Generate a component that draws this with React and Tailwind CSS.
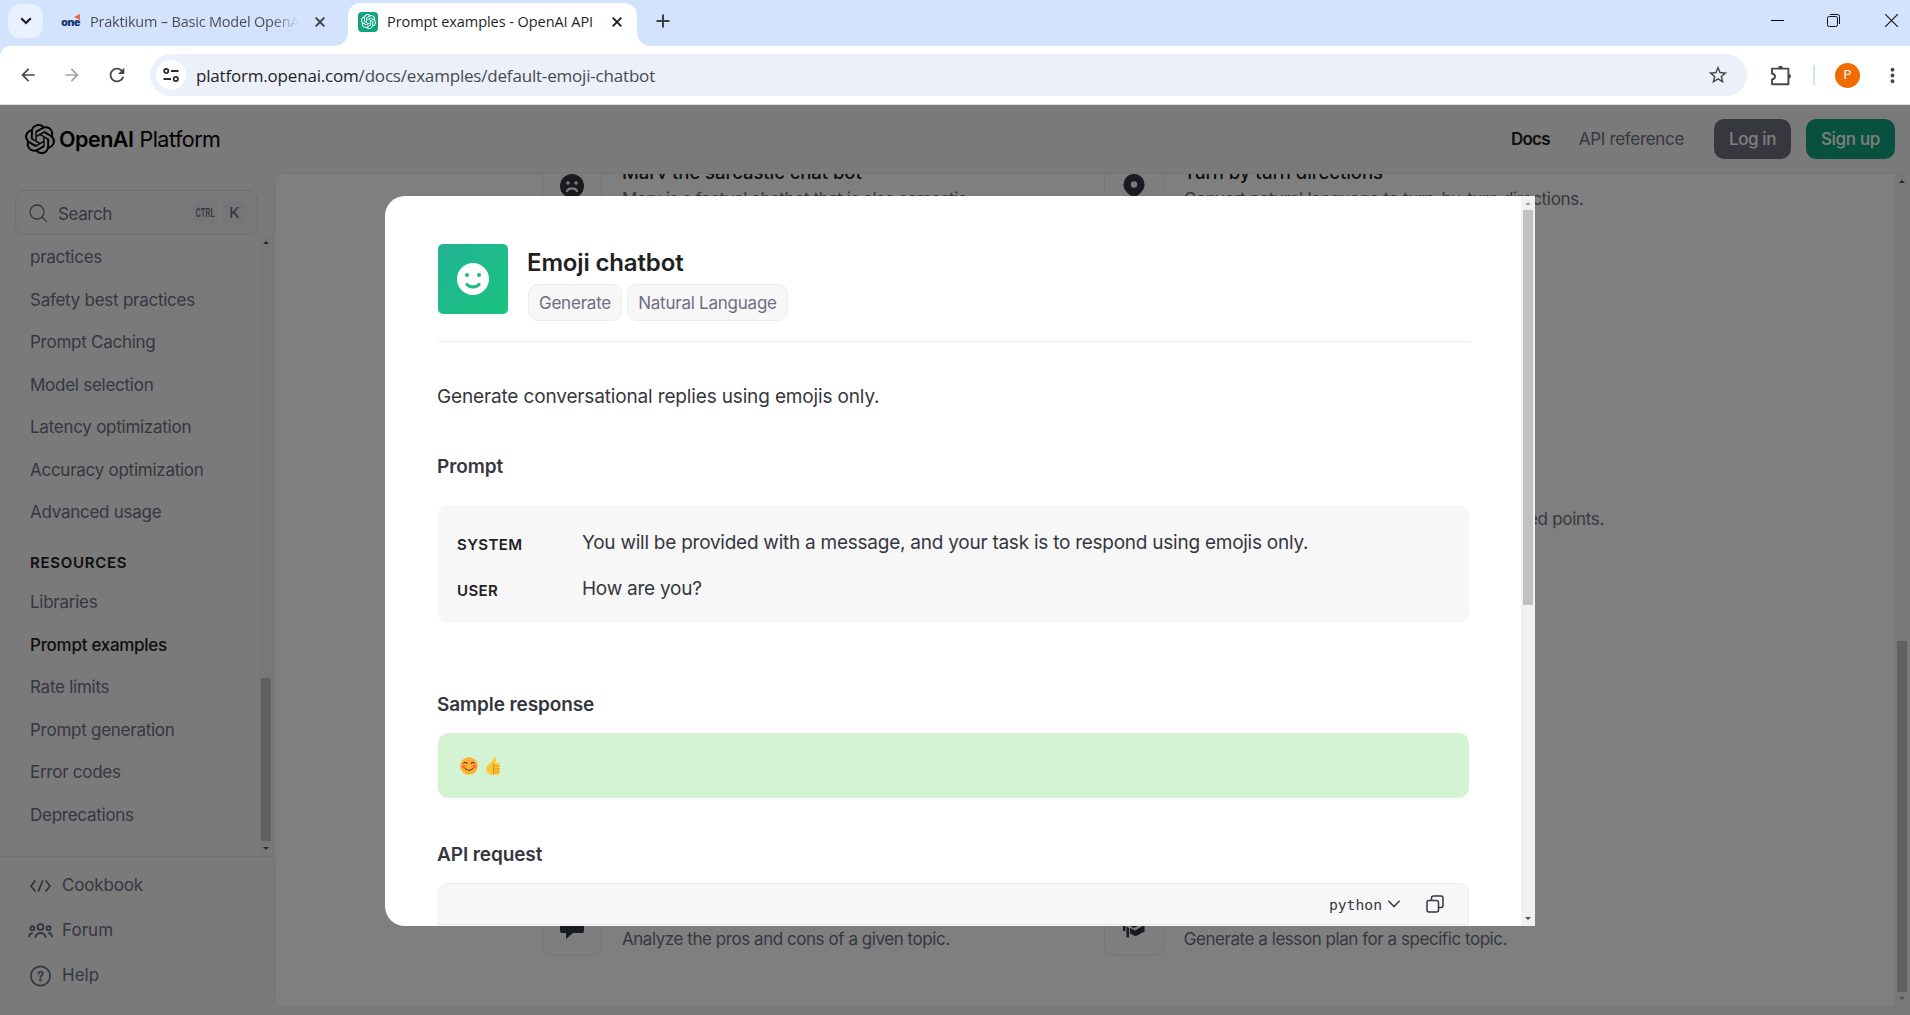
import React from 'react';
import { SiOpenai } from 'react-icons/si';
import { MdArrowBack, MdArrowForward, MdRefresh, MdStarBorder, MdMoreVert } from 'react-icons/md';

function Cross({ className }) {
  return (
    <svg viewBox="0 0 10 10" className={className} fill="none" stroke="currentColor" strokeWidth="1.9">
      <path d="M.7.7l8.6 8.6M9.3.7L.7 9.3" />
    </svg>
  );
}

function TabStrip() {
  return (
    <div className="flex h-[46px] bg-[#d3e2fd] pl-2">
      <div className="mt-1 flex h-[34px] w-[35px] items-center justify-center rounded-xl bg-[#e9f0fe]">
        <svg viewBox="0 0 12 8" className="h-2 w-3" fill="none" stroke="#1f1f1f" strokeWidth="2.2">
          <path d="M1.2 1.2L6 6l4.800-4.800" />
        </svg>
      </div>
      <div className="flex h-[43px] w-[291px] items-center pl-[18px]">
        <div className="relative w-[19px] font-['Open_Sans'] text-[11px] font-extrabold leading-none tracking-[-0.8px] text-[#173a78]">
          one
          <svg viewBox="0 0 6 6" className="absolute -top-[2px] right-0 size-[6px]">
            <path d="M6 0v6L0 3z" fill="#f2643d" />
          </svg>
        </div>
        <div className="ml-[10px] w-[213px] overflow-hidden whitespace-nowrap bg-linear-to-r from-[#474a50] from-85% to-[#d3e2fd] to-98% bg-clip-text text-[14.5px] tracking-[-0.2px] text-transparent">
          Praktikum – Basic Model OpenAI
        </div>
        <Cross className="ml-[12px] size-[10px] text-[#3c3f43]" />
      </div>
      <div className="flex w-[14px] items-end bg-linear-to-t from-white from-[14px] to-transparent to-[14px]">
        <div className="h-[46px] w-[14px] rounded-br-[14px] bg-[#d3e2fd]" />
      </div>
      <div className="mt-[3px] flex w-[289px] items-center rounded-t-[13px] bg-white pb-[6px] pl-[10px]">
        <div className="flex size-5 items-center justify-center rounded-[4px] bg-[#10a37f]">
          <SiOpenai className="size-[15px] text-white" />
        </div>
        <div className="ml-[9px] w-[218px] whitespace-nowrap text-[14.5px] tracking-[-0.06px] text-[#1f1f1f]">
          Prompt examples - OpenAI API
        </div>
        <Cross className="ml-[7px] size-[10px] text-[#1f1f1f]" />
      </div>
      <div className="flex w-[14px] items-end bg-linear-to-t from-white from-[14px] to-transparent to-[14px]">
        <div className="h-[46px] w-[14px] rounded-bl-[14px] bg-[#d3e2fd]" />
      </div>
      <svg viewBox="0 0 14 14" className="ml-[5px] mt-[14px] size-[14px]" stroke="#3c3f43" strokeWidth="2">
        <path d="M7 .5v13M.5 7h13" />
      </svg>
      <div className="mr-3 ml-auto flex gap-[43px] pt-[14px]">
        <svg viewBox="0 0 13 13" className="size-[13px]" stroke="#000"><path d="M0 6.500h13" /></svg>
        <svg viewBox="0 0 13 13" className="size-[13px]" fill="none" stroke="#111">
          <rect x=".5" y="2.500" width="10" height="10" rx="1.800" />
          <path d="M3 .5h7.500a2 2 0 0 1 2 2V10" />
        </svg>
        <svg viewBox="0 0 13 13" className="ml-[2px] size-[13px]" fill="none" stroke="#111" strokeWidth="1.1"><path d="M0 0l13 13M13 0L0 13" /></svg>
      </div>
    </div>
  );
}

function Toolbar() {
  return (
    <div className="bg-[#d3e2fd]">
      <div className="flex h-[59px] items-center rounded-tl-[10px] border-b border-[#dcdcdc] bg-white pl-[18px]">
        <MdArrowBack className="size-5 text-[#474747]" />
        <MdArrowForward className="ml-[24px] size-5 text-[#a5a5a5]" />
        <MdRefresh className="ml-[24px] size-[22px] text-[#474747]" />
        <div className="ml-[22px] flex h-[42px] w-[1597px] items-center rounded-full bg-[#ebf0fa] pl-[6px]">
          <div className="flex size-[30px] items-center justify-center rounded-full bg-white">
            <svg viewBox="0 0 16 14" className="h-[14px] w-4" fill="none" stroke="#2b2b2b" strokeWidth="1.800">
              <circle cx="3.200" cy="3" r="2.100" />
              <path d="M8 3h7.500M.5 11H8" />
              <circle cx="12.800" cy="11" r="2.100" />
            </svg>
          </div>
          <div className="ml-[10px] whitespace-nowrap pt-px text-[17px] tracking-[-0.19px] text-[#474a4f]">
            <span className="text-[#1f1f1f]">platform.openai.com</span>/docs/examples/default-emoji-chatbot
          </div>
          <MdStarBorder className="ml-auto mr-[18px] size-[22px] text-[#474747]" />
        </div>
        <svg viewBox="0 0 21 21" className="ml-[24px] size-[21px]" fill="none" stroke="#474747" strokeWidth="1.900" strokeLinejoin="round">
          <path d="M1 3.600h16.400v15.700H1v-4.800c1.900-.4 3-1.500 3-3s-1.100-2.600-3-3z" />
          <path d="M7 3.200a2.400 2.400 0 0 1 4.800 0zM17.700 9a2.300 2.300 0 0 1 0 4.600z" fill="#474747" stroke="none" />
        </svg>
        <div className="ml-[21px] h-5 w-[2px] bg-[#d3e2fd]" />
        <div className="ml-[20px] flex size-[25px] items-center justify-center rounded-full bg-[#f06c00] font-['Roboto'] text-[12.500px] text-white">P</div>
        <MdMoreVert className="ml-[21px] size-[23px] text-[#474747]" />
      </div>
    </div>
  );
}

function Arrow({ down, className }) {
  return (
    <svg viewBox="0 0 6 3" className={`h-[3px] w-[6px] shrink-0 ${className}`} fill="currentColor">
      <path d={down ? 'M0 0h6L3 3z' : 'M0 3h6L3 0z'} />
    </svg>
  );
}

function Header() {
  return (
    <header className="flex h-[68px] items-center pl-[25px] pr-[15px] text-[17px]">
      <SiOpenai className="size-[30px] text-black" />
      <div className="ml-[4px] text-[21.500px] tracking-[-0.5px] text-black">
        <span className="font-semibold">OpenAI</span>
        <span className="ml-[6px]">Platform</span>
      </div>
      <div className="ml-auto pt-[2px] font-semibold tracking-[-0.75px] text-[#202123]">Docs</div>
      <div className="ml-[29px] pt-[2px] tracking-[-0.32px] text-[#6e6e80]">API reference</div>
      <button className="ml-[30px] flex h-10 w-[77px] items-center justify-center rounded-[10px] bg-[#6e6e80] pt-[2px] font-medium tracking-[-0.4px] text-white">Log in</button>
      <button className="ml-[15px] flex h-10 w-[89px] items-center justify-center rounded-[10px] bg-[#10a37f] pt-[2px] font-medium tracking-[-0.3px] text-white">Sign up</button>
    </header>
  );
}

function NavItem({ children, active }) {
  return (
    <div className={active ? 'w-[200px] py-[8.750px] font-medium tracking-[-0.28px] text-[#202123]' : 'w-[200px] py-[8.750px] tracking-[-0.26px]'}>
      {children}
    </div>
  );
}

const guides = ['Safety best practices', 'Prompt Caching', 'Model selection', 'Latency optimization', 'Accuracy optimization', 'Advanced usage'];
const resources = ['Libraries', 'Prompt examples', 'Rate limits', 'Prompt generation', 'Error codes', 'Deprecations'];

function Sidebar() {
  return (
    <aside className="flex w-[274px] shrink-0 flex-col text-[17px] leading-[25px] text-[#6e6e80]">
      <div className="mt-[17px] ml-[15px] flex h-[45px] w-[243px] shrink-0 items-center rounded-[10px] border border-[#dedee4] pl-[13px] pr-[10px]">
        <svg viewBox="0 0 18 18" className="size-[18px]" fill="none" stroke="currentColor" strokeWidth="1.300" strokeLinecap="round">
          <circle cx="8" cy="8" r="7" />
          <path d="M13 13l4.300 4.300" />
        </svg>
        <span className="ml-[11px] pt-[3px] tracking-[-0.4px]">Search</span>
        <span className="ml-auto flex h-[23px] w-[25px] items-center justify-center rounded-[4px] bg-[#ececf1]">
          <span className="inline-block scale-x-[0.62] font-['Roboto'] text-[12.500px] font-semibold">CTRL</span>
        </span>
        <span className="ml-1 flex h-[23px] w-[25px] items-center justify-center rounded-[4px] bg-[#ececf1] text-[15px] font-medium">K</span>
      </div>
      <div className="flex h-[622px] shrink-0 overflow-hidden border-b border-[#e6e6e6]">
        <div className="relative flex-1 overflow-hidden">
          <div className="-mt-[23.500px] pl-[30px]">
            <NavItem>Production best<br />practices</NavItem>
            {guides.map((g) => <NavItem key={g}>{g}</NavItem>)}
            <div className="pt-[15.500px] pb-[7px] text-[15px] font-semibold tracking-[0.7px] text-[#202123]">RESOURCES</div>
            {resources.map((r) => <NavItem key={r} active={r === 'Prompt examples'}>{r}</NavItem>)}
          </div>
          <div className="absolute inset-x-0 top-0 h-2 bg-linear-to-b from-[#f4f4f4] from-40% to-[#f4f4f4]/0" />
        </div>
        <div className="flex w-[15px] flex-col items-center bg-[#f1f1f1] pt-[6px] pr-px">
          <Arrow className="text-[#505050]" />
          <div className="mt-[434px] h-[163px] w-[10px] shrink-0 bg-[#c1c1c1]" />
          <Arrow down className="mt-[6px] text-[#505050]" />
        </div>
      </div>
      <div className="pt-[6px] pl-[28px]">
        <div className="flex h-[45px] items-center">
          <svg viewBox="0 0 25 20" className="h-5 w-[25px]" fill="none" stroke="currentColor" strokeWidth="1.900" strokeLinecap="round" strokeLinejoin="round">
            <path d="M7 5l-4 5 4 5M18 5l4 5-4 5M14.500 5l-4 10" />
          </svg>
          <span className="ml-[9px] tracking-[-0.16px]">Cookbook</span>
        </div>
        <div className="flex h-[45px] items-center">
          <svg viewBox="0 0 25 20" className="h-5 w-[25px]" fill="none" stroke="currentColor" strokeWidth="1.900" strokeLinecap="round">
            <circle cx="12.500" cy="6" r="2.900" />
            <circle cx="4.400" cy="7.200" r="2" />
            <circle cx="20.600" cy="7.200" r="2" />
            <path d="M7.500 16c.6-2.600 2.500-4 5-4s4.400 1.400 5 4M1 15.500c.2-1.700 1.200-3 3-3.200M24 15.500c-.2-1.700-1.200-3-3-3.200" />
          </svg>
          <span className="ml-[9px] tracking-[0.05px]">Forum</span>
        </div>
        <div className="flex h-[45px] items-center">
          <svg viewBox="0 0 25 22" className="h-[22px] w-[25px]" fill="none" stroke="currentColor" strokeWidth="1.800" strokeLinecap="round">
            <circle cx="12.500" cy="11" r="9.600" />
            <path d="M10.400 8.600c.2-1.300 1-1.900 2.100-1.900 1.300 0 2.200.8 2.200 1.900 0 1.700-2.200 1.700-2.200 3.600" />
            <circle cx="12.500" cy="15.200" r=".5" />
          </svg>
          <span className="ml-[9px] tracking-[0px]">Help</span>
        </div>
      </div>
    </aside>
  );
}

const icons = {
  sad: (
    <svg viewBox="0 0 24 24" className="size-6">
      <circle cx="12" cy="12" r="12" fill="#353740" />
      <circle cx="8" cy="9" r="1.800" fill="#f7f7f8" />
      <circle cx="16" cy="9" r="1.800" fill="#f7f7f8" />
      <path d="M7 17c1.600-3.400 8.400-3.400 10 0" fill="none" stroke="#f7f7f8" strokeWidth="2.200" strokeLinecap="round" />
    </svg>
  ),
  pin: (
    <svg viewBox="0 0 24 26" className="h-[26px] w-6">
      <path d="M12 1a10.300 10.300 0 0 1 10.500 10.400C22.500 17 18 21 12 25 6 21 1.500 17 1.500 11.400A10.300 10.300 0 0 1 12 1z" fill="#353740" />
      <circle cx="12" cy="11.500" r="3.200" fill="#f7f7f8" />
    </svg>
  ),
  chat: (
    <svg viewBox="0 0 24 26" className="h-[26px] w-6">
      <path d="M2 0h20a2 2 0 0 1 2 2v16a2 2 0 0 1-2 2h-9l-7 6v-6H2a2 2 0 0 1-2-2V2a2 2 0 0 1 2-2z" fill="#353740" />
    </svg>
  ),
  lesson: (
    <svg viewBox="0 0 24 24" className="size-6">
      <path d="M12 2L.5 8l11.500 6L23.500 8zM1 10h2.500v7H1zM4.500 12.500L7 14v9.500H4.500zM8 14l5 2.500L22.500 11v7c-3 0-6 3.800-9.500 4L8 19.500z" fill="#353740" />
    </svg>
  ),
};

const tight = 'tracking-[-0.45px]';
const normal = 'tracking-[-0.31px]';

const cards = [
  ['Marv the sarcastic chat bot', 'Marv is a factual chatbot that is also sarcastic.', 'sad', tight],
  ['Turn by turn directions', 'Convert natural language to turn-by-turn directions.', 'pin', normal],
  ['Interview questions', 'Create interview questions.', 'chat', tight],
  ['Function from specification', 'Create a Python function from a specification.', 'lesson', tight],
  ['Improve code efficiency', 'Provide ideas for efficiency improvements to code.', 'chat', tight],
  ['Single page website creator', 'Create a single page website.', 'lesson', tight],
  ['Rap battle writer', 'Generate a rap battle between two characters.', 'chat', tight],
  ['Memo writer', 'Generate a company memo based on provided points.', 'lesson', normal],
  ['Emoji chatbot', 'Generate conversational replies using emojis only.', 'chat', tight],
  ['Translation', 'Translate natural language text.', 'lesson', tight],
  ['Socratic tutor', 'Generate responses as a Socratic tutor.', 'chat', tight],
  ['Natural language to SQL', 'Convert natural language into SQL queries.', 'lesson', tight],
  ['Meeting notes summarizer', 'Summarize meeting notes including action items.', 'chat', tight],
  ['Review classifier', 'Classify user reviews based on a set of tags.', 'lesson', tight],
  ['Pro and con discusser', 'Analyze the pros and cons of a given topic.', 'chat', tight],
  ['Lesson plan writer', 'Generate a lesson plan for a specific topic.', 'lesson', tight],
];

function Examples() {
  return (
    <main className="mb-[8px] flex min-w-0 flex-1 overflow-hidden rounded-[10px] border-y border-l border-[#ebebeb] bg-white">
      <div className="flex-1 overflow-hidden">
        <div className="-mt-[18px] ml-[267px] grid w-[1084px] grid-cols-2 grid-rows-[61px_61px_61px_57px] gap-x-[39.500px] gap-y-[45.700px]">
          {cards.map(([title, desc, icon, tracking]) => (
            <div key={title} className="flex h-[60px] gap-5">
              <div className="flex size-[60px] shrink-0 items-center justify-center rounded-[10px] border border-[#ececf1] bg-[#fcfcfd]">{icons[icon]}</div>
              <div className="whitespace-nowrap">
                <div className="pt-[3px] text-[18.500px] font-medium leading-[27px] tracking-[-0.06px] text-[#202123]">{title}</div>
                <div className={`text-[17px] leading-[26px] text-[#6e6e80] ${tracking}`}>{desc}</div>
              </div>
            </div>
          ))}
        </div>
      </div>
      <div className="flex w-[15px] flex-col items-center bg-[#f1f1f1] pt-[6px] pr-px">
        <Arrow className="text-[#505050]" />
        <div className="mt-[458px] h-[351px] w-[10px] shrink-0 bg-[#c1c1c1]" />
        <Arrow down className="mt-[5px] text-[#a3a3a3]" />
      </div>
    </main>
  );
}

function Heading({ children, className }) {
  return <h3 className={`-ml-px text-[19px] font-semibold leading-[30px] tracking-[-0.1px] ${className}`}>{children}</h3>;
}

function Message({ role, children }) {
  return (
    <div className="flex h-[46px] items-center">
      <div className="w-[125px] pt-[5px] text-[15px] font-semibold tracking-[0.4px] text-[#202123]">{role}</div>
      <div className="text-[19px] tracking-[-0.25px]">{children}</div>
    </div>
  );
}

function Modal() {
  return (
    <div className="absolute left-[385px] top-[91px] flex h-[730px] w-[1150px] overflow-hidden rounded-l-[20px] bg-white text-[#353740]">
      <div className="w-[1136px] overflow-hidden pt-12 pr-[52px] pl-[53px]">
        <div className="flex h-[98px] gap-5 border-b border-[#ececec]">
          <div className="flex size-[70px] items-center justify-center rounded-[5px] bg-linear-to-br from-[#22b396] to-[#19c37d]">
            <svg viewBox="0 0 32 32" className="size-8">
              <circle cx="16" cy="16" r="16" fill="#fff" />
              <circle cx="10" cy="12" r="2.100" fill="#1fbb88" />
              <circle cx="22" cy="12" r="2.100" fill="#1fbb88" />
              <path d="M10 21.500c3 3.200 9 3.200 12 0" fill="none" stroke="#1fbb88" strokeWidth="3.200" strokeLinecap="round" />
            </svg>
          </div>
          <div>
            <h2 className="-ml-px text-[24px] font-semibold leading-[37px] tracking-[-0.15px] text-[#202123]">Emoji chatbot</h2>
            <div className="mt-[3px] flex gap-[5px] text-[17px] text-[#6e6e80]">
              <span className="flex h-[37px] w-[94px] items-center justify-center rounded-[10px] border border-[#ececf1] bg-[#f7f7f8] pt-[2px] tracking-[-0.22px]">Generate</span>
              <span className="flex h-[37px] w-[161px] items-center justify-center rounded-[10px] border border-[#ececf1] bg-[#f7f7f8] pt-[2px] tracking-[-0.24px]">Natural Language</span>
            </div>
          </div>
        </div>
        <p className="-ml-px mt-10 text-[19px] leading-[30px] tracking-[-0.15px]">Generate conversational replies using emojis only.</p>
        <Heading className="mt-10">Prompt</Heading>
        <div className="mt-[23px] h-[118px] rounded-[10px] bg-[#f7f7f7] px-[19px] pt-[15px]">
          <Message role="SYSTEM">You will be provided with a message, and your task is to respond using emojis only.</Message>
          <Message role="USER">How are you?</Message>
        </div>
        <Heading className="mt-[67px]">Sample response</Heading>
        <div className="mt-[13px] flex h-[65px] items-center gap-2 rounded-[10px] bg-[#d3f3d3] pl-[22px]">
          <svg viewBox="0 0 18 18" className="size-[18px]" role="img" aria-label="😊">
            <circle cx="9" cy="9" r="8.800" fill="#ffb02e" />
            <circle cx="3.600" cy="9.600" r="1.900" fill="#ff6a3d" />
            <circle cx="14.400" cy="9.600" r="1.900" fill="#ff6a3d" />
            <path d="M3.700 6.500c.6-1.700 2.500-1.700 3.100 0M11.200 6.500c.6-1.700 2.500-1.700 3.100 0M5.300 11.500c1.700 2.300 5.700 2.300 7.400 0" fill="none" stroke="#4a3040" strokeWidth="1.100" strokeLinecap="round" />
          </svg>
          <svg viewBox="0 0 14 18" className="h-[18px] w-[14px]" role="img" aria-label="👍">
            <path d="M8.500.3c1.200.2 1.700 1.200 1.500 2.500L9.500 6H12c1.500 0 1.800 1 1.600 2v7.500c0 1.500-1 2.300-2.500 2.300H6C2.500 17.800.2 15.600.2 12.500.2 9.500 2 8 4.300 6.300 6 5 6.800 3.500 7 1.500 7.100.7 7.700.2 8.500.3z" fill="#ffc83d" />
            <path d="M7.500 6.700v10.800M8 9h5.500M8 12h5.500M8 15h5.300" fill="none" stroke="#d98e12" strokeWidth=".9" />
          </svg>
        </div>
        <Heading className="mt-[42px]">API request</Heading>
        <div className="mt-[13px] h-[300px] rounded-[10px] border border-[#ececf1] bg-[#f7f7f8]">
          <div className="flex h-[41px] items-center justify-end border-b border-[#e6e6ec] pr-6">
            <span className="pt-[2px] font-['DejaVu_Sans_Mono'] text-[14.700px]">python</span>
            <svg viewBox="0 0 12 8" className="ml-[6px] h-2 w-3" fill="none" stroke="currentColor" strokeWidth="1.500" strokeLinecap="round" strokeLinejoin="round">
              <path d="M.8 1.200L6 6.600l5.200-5.400" />
            </svg>
            <svg viewBox="0 0 18 18" className="ml-[26px] size-[18px]" fill="none" stroke="currentColor" strokeWidth="1.500">
              <rect x="1" y="5.500" width="11.500" height="11.500" rx="2" />
              <path d="M5.500 5.300V3a2 2 0 0 1 2-2H15a2 2 0 0 1 2 2v7.500a2 2 0 0 1-2 2h-2.300" />
            </svg>
          </div>
        </div>
      </div>
      <div className="flex w-[14px] flex-col items-center bg-[#f1f1f1] pt-[6px]">
        <Arrow className="text-[#a3a3a3]" />
        <div className="mt-[5px] h-[395px] w-[10px] shrink-0 bg-[#c1c1c1]" />
        <Arrow down className="mt-[312px] text-[#505050]" />
      </div>
    </div>
  );
}

export default function App() {
  return (
    <div className="flex h-[1015px] w-[1910px] flex-col overflow-hidden font-['Open_Sans',sans-serif]">
      <TabStrip />
      <Toolbar />
      <div className="relative flex flex-1 flex-col overflow-hidden bg-[#f4f4f4] font-['Inter',sans-serif]">
        <Header />
        <div className="flex min-h-0 flex-1">
          <Sidebar />
          <Examples />
        </div>
        <div className="absolute inset-0 bg-black/50" />
        <Modal />
      </div>
    </div>
  );
}
